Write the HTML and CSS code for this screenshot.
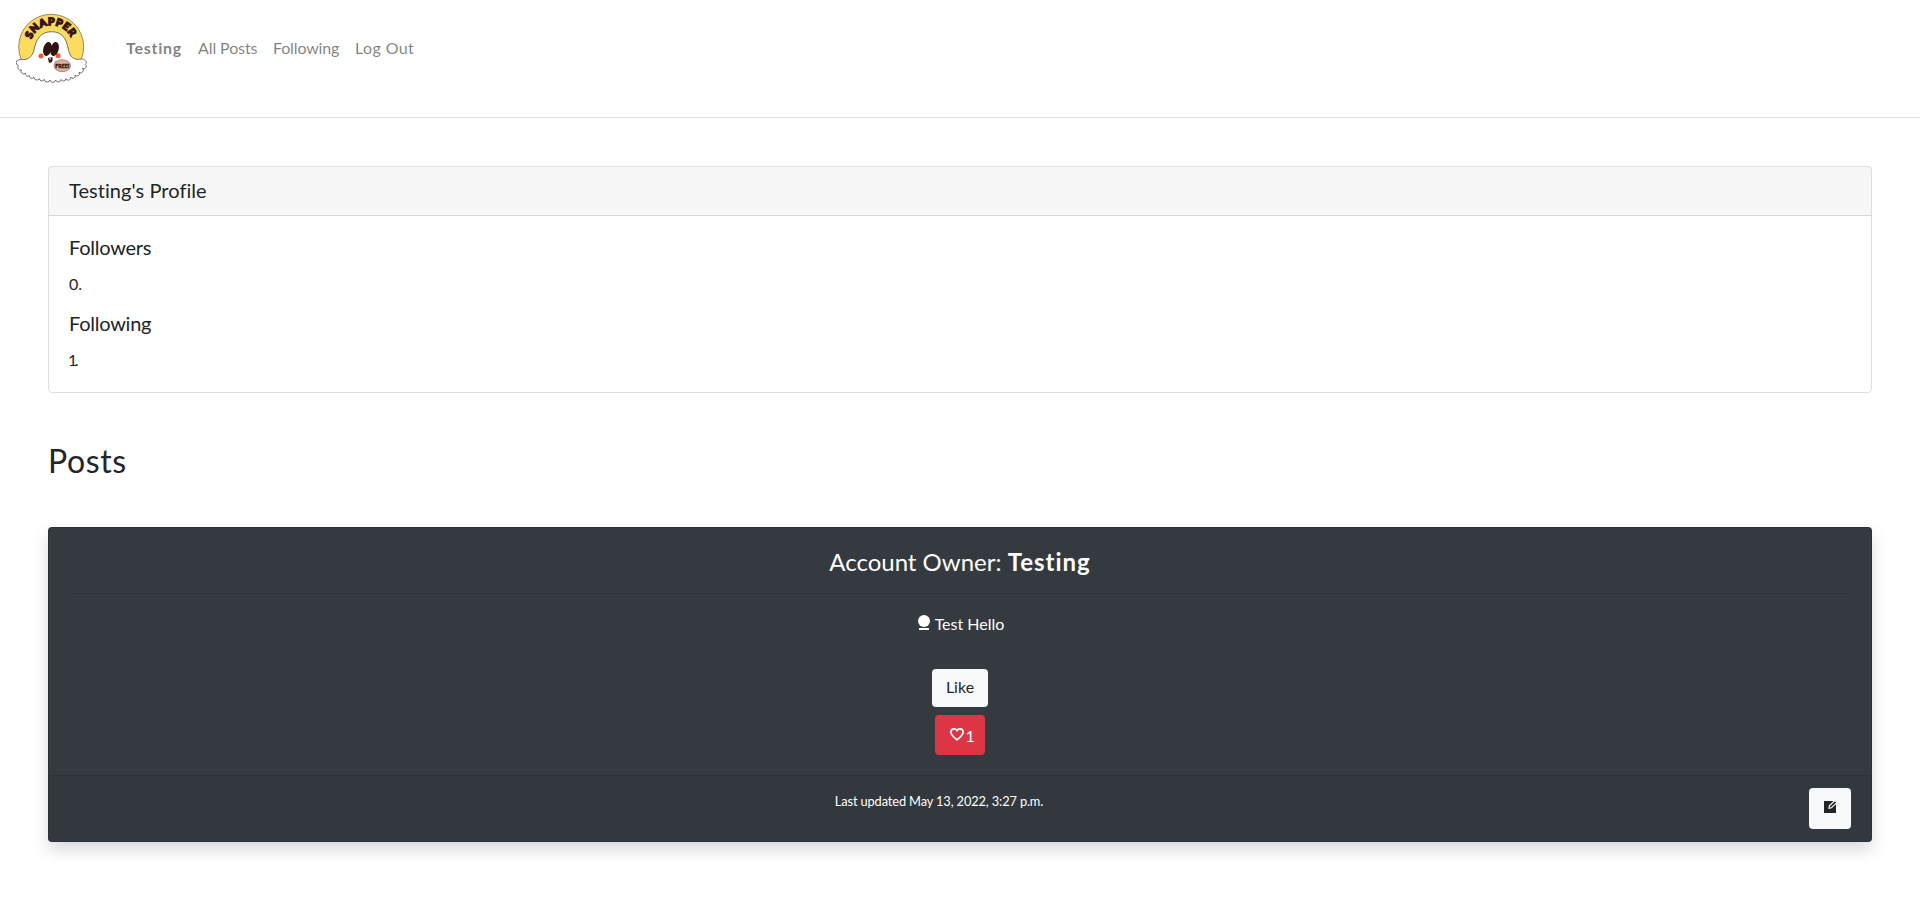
FILE: index.html
```html
<!DOCTYPE html>
<html lang="en">
<head>
<meta charset="utf-8">
<title>Snapper</title>
<link rel="stylesheet" href="styles.css">
</head>
<body>
<nav class="navbar">
  <a class="brand" href="#">
    <svg class="logo" viewBox="0 0 80 80" width="80" height="80" role="img" aria-label="Snapper">
      <defs><path id="arc" d="M15.400 31.400A21.300 21.300 0 0 1 55.600 31.400"/></defs>
      <circle cx="35.200" cy="38.800" r="32.500" fill="#fcdc5e" stroke="#6b5a4a" stroke-width=".7"/>
      <path d="M2.500 52C5 51 7 52 10 51.300C15 50 17 46 18 42C20 31 25 23.700 35.500 23.700S50.500 31 52 40C53.500 47 56 51 61 51.300C64 51.500 67 50 69.300 52.500A2.300 2.300 0 0 1 69.300 56.300A2.500 2.500 0 0 1 66.300 60.300A2.500 2.500 0 0 1 63 64.300A2.300 2.300 0 0 1 59 67A2.300 2.300 0 0 1 54.700 69A2.400 2.400 0 0 1 50 70.500A2.600 2.600 0 0 1 45 71.500A2.700 2.700 0 0 1 39.700 72A2.900 2.900 0 0 1 34 72A2.900 2.900 0 0 1 28.300 71.300A2.600 2.600 0 0 1 23.300 70.500A2.800 2.800 0 0 1 18 69A2.500 2.500 0 0 1 13.300 67.500A2.300 2.300 0 0 1 9.500 65A2.500 2.500 0 0 1 5.500 62A2.800 2.800 0 0 1 2.500 57.500A2.800 2.800 0 0 1 2.500 52Z" fill="#fff" stroke="#5c504c" stroke-width=".8"/>
      <circle cx="25" cy="48" r="2.500" fill="#ef5a35"/>
      <circle cx="42.100" cy="47.700" r="2.500" fill="#ef5a35"/>
      <ellipse cx="31.400" cy="41" rx="4.100" ry="7.100" transform="rotate(14 31.400 41)" fill="#321111"/>
      <ellipse cx="38.600" cy="41" rx="4.100" ry="7.100" transform="rotate(14 38.600 41)" fill="#321111"/>
      <path d="M31.800 50L36.500 49.300L36.500 52.500Q35.500 55.500 33 54.500Z" fill="#321111"/>
      <path d="M33.200 50.300h1.600v1.200h-1.400z" fill="#fff"/>
      <path d="M38 52.500L41.500 53L40 56Z" fill="#d8b49c"/>
      <ellipse cx="46.300" cy="57.700" rx="8.300" ry="6" fill="#d8b49c" stroke="#755a4c" stroke-width=".6"/>
      <text class="logo-free" x="39.300" y="59.800" textLength="14" lengthAdjust="spacingAndGlyphs">FREE!</text>
      <text class="logo-name" textLength="50"><textPath href="#arc">SNAPPER</textPath></text>
    </svg>
  </a>
  <ul class="nav">
    <li><a class="nav-user" href="#">Testing</a></li>
    <li><a class="nav-posts" href="#">All Posts</a></li>
    <li><a class="nav-following" href="#">Following</a></li>
    <li><a class="nav-logout" href="#">Log Out</a></li>
  </ul>
</nav>
<main class="content">
  <section class="card">
    <h5 class="card-header">Testing's Profile</h5>
    <div class="card-body">
      <h5 class="card-title">Followers</h5>
      <p class="card-text">0.</p>
      <h5 class="card-title">Following</h5>
      <p class="card-text last">1.</p>
    </div>
  </section>
  <h2 class="section-title">Posts</h2>
  <article class="card post">
    <div class="card-body">
      <h4 class="owner">Account Owner: <strong>Testing</strong></h4>
      <hr class="rule">
      <p class="message"><svg class="person" viewBox="0 0 12 15" width="12" height="15"><circle cx="6" cy="6" r="6" fill="#fff"/><path d="M1 13h10v2H1z" fill="#fff"/></svg><span>Test Hello</span></p>
      <div class="actions">
        <button class="btn light">Like</button>
        <button class="btn danger"><svg class="heart" viewBox="0 0 14 13" width="14" height="13"><path d="M7 11.800C3.500 9 .9 7 .9 4.200C.9 2.200 2.300 .9 4 .9C5.300 .9 6.400 1.600 7 2.700C7.600 1.600 8.700 .9 10 .9C11.700 .9 13.100 2.200 13.100 4.200C13.100 7 10.500 9 7 11.800Z" fill="none" stroke="#fff" stroke-width="1.600"/></svg><span>1</span></button>
      </div>
    </div>
    <footer class="card-footer">
      <small class="updated">Last updated May 13, 2022, 3:27 p.m.</small>
      <button class="btn light edit" aria-label="Edit"><svg viewBox="0 0 14 13" width="14" height="13"><path d="M0 1h12v12H0z" fill="#212529"/><path d="M5 8.200L5.400 5.700L10.700 .6L12.800 2.600L7.500 7.800Z" fill="#212529" stroke="#f8f9fa" stroke-width="1.200"/></svg></button>
    </footer>
  </article>
</main>
</body>
</html>
```
FILE: styles.css
```css
* { box-sizing: border-box; }
body { margin: 0; background: #fff; color: #212529; font: 400 16px/24px Lato, "Liberation Sans", sans-serif; font-variant-ligatures: none; }
h2, h4, h5, p, ul { margin: 0; padding: 0; font-weight: 400; }
.navbar { display: flex; align-items: flex-start; height: 118px; padding: 8px 16px; border-bottom: 1px solid #dee2e6; }
.brand { display: block; height: 80px; }
.logo { display: block; }
.logo-name { font: 900 10.5px Lato, sans-serif; fill: #3a1510; stroke: #3a1510; stroke-width: 1.3; }
.logo-free { font: 900 5.5px Lato, sans-serif; fill: #3a1510; stroke: #3a1510; stroke-width: .4; }
.nav { display: flex; gap: 16px; list-style: none; margin: 28px 0 0 30px; }
.nav a { display: block; color: rgba(0, 0, 0, .5); text-decoration: none; white-space: nowrap; }
.nav-user { width: 56px; font-weight: 700; letter-spacing: .75px; }
.nav-posts { width: 59px; letter-spacing: -.1px; }
.nav-following { width: 66px; letter-spacing: -.15px; }
.nav-logout { letter-spacing: .4px; }
.content { padding: 48px; }
.card { border: 1px solid rgba(0, 0, 0, .125); border-radius: 4px; }
.card-header { padding: 11px 20px 13px; background: rgba(0, 0, 0, .03); border-bottom: 1px solid rgba(0, 0, 0, .125); font-size: 20px; line-height: 24px; letter-spacing: .06px; }
.card-body { padding: 20px; }
.card-title { margin: -1px 0 13px; font-size: 20px; line-height: 24px; letter-spacing: -.25px; }
.card-text { margin-bottom: 16px; }
.card-text.last { margin-bottom: 0; letter-spacing: -2.5px; text-indent: -1px; }
.section-title { margin: 48px 0; padding-top: 1px; font-size: 32px; line-height: 37px; letter-spacing: .6px; }
.post { background: #343a40; color: #fff; text-align: center; box-shadow: 0 8px 16px rgba(0, 0, 0, .15); }
.owner { margin-top: -1px; padding-bottom: 1px; font-size: 24px; line-height: 29px; }
.owner strong { letter-spacing: 1px; }
.rule { margin: 16px 0; border: 0; border-top: 1px solid rgba(0, 0, 0, .1); }
.message { display: flex; justify-content: center; gap: 5px; padding: 2px 0 0 2px; }
.person { margin-top: 3px; }
.actions { display: flex; flex-direction: column; align-items: center; gap: 8px; margin-top: 33px; }
.btn { display: flex; align-items: center; justify-content: center; height: 38px; padding: 0 0 2px; border: 0; border-radius: 4px; font: inherit; }
.light { width: 56px; background: #f8f9fa; color: #212529; }
.danger { width: 50px; height: 40px; padding: 0 0 1px 2px; gap: 2px; background: #dc3545; color: #fff; }
.heart { margin-bottom: 1px; }
.danger span { width: 7px; padding-top: 3px; }
.card-footer { display: flex; padding: 12px 20px; background: rgba(0, 0, 0, .03); border-top: 1px solid rgba(0, 0, 0, .125); }
.updated { flex: 1; padding-top: 1px; font-size: 12.8px; letter-spacing: -.12px; }
.edit { width: 42px; height: 41px; padding: 0 0 4px 2px; }
```
